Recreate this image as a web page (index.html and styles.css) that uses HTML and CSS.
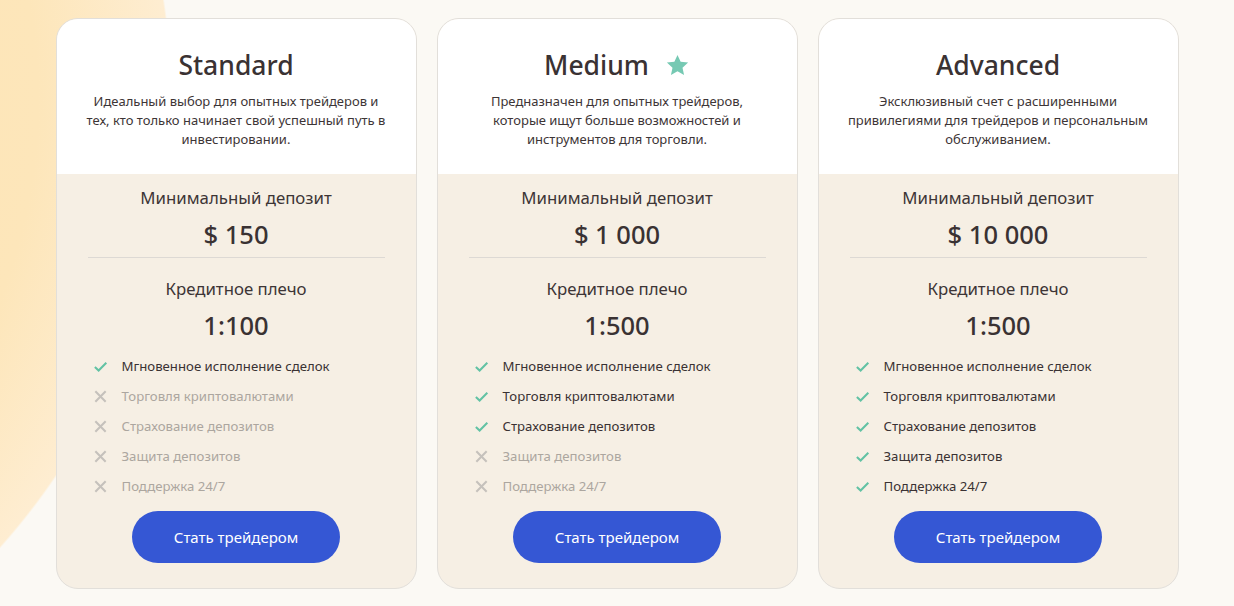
FILE: index.html
```html
<!DOCTYPE html>
<html lang="ru">
<head>
<meta charset="utf-8">
<title>Тарифы</title>
<link rel="stylesheet" href="styles.css">
</head>
<body>
<main class="plans">
  <section class="card">
    <header class="card-head">
      <h2 class="title">Standard</h2>
      <p class="desc">Идеальный выбор для опытных трейдеров и тех, кто только начинает свой успешный путь в инвестировании.</p>
    </header>
    <div class="card-body">
      <div class="label">Минимальный депозит</div>
      <div class="value">$ 150</div>
      <hr class="divider">
      <div class="label label-2">Кредитное плечо</div>
      <div class="value">1:100</div>
      <ul class="features">
        <li class="on"><svg class="ic" viewBox="0 0 16 16"><path d="M2 8.5l4 3.8L14.2 4"/></svg>Мгновенное исполнение сделок</li>
        <li class="off"><svg class="ic" viewBox="0 0 16 16"><path d="M2.5 2.5l11 11M13.5 2.5l-11 11"/></svg>Торговля криптовалютами</li>
        <li class="off"><svg class="ic" viewBox="0 0 16 16"><path d="M2.5 2.5l11 11M13.5 2.5l-11 11"/></svg>Страхование депозитов</li>
        <li class="off"><svg class="ic" viewBox="0 0 16 16"><path d="M2.5 2.5l11 11M13.5 2.5l-11 11"/></svg>Защита депозитов</li>
        <li class="off"><svg class="ic" viewBox="0 0 16 16"><path d="M2.5 2.5l11 11M13.5 2.5l-11 11"/></svg>Поддержка 24/7</li>
      </ul>
      <button class="btn">Стать трейдером</button>
    </div>
  </section>

  <section class="card">
    <header class="card-head">
      <h2 class="title">Medium<svg class="star" viewBox="0 0 24 24"><path d="M12 1.8l3 6.6 7.2.8-5.4 4.9 1.5 7.1L12 17.6l-6.3 3.6 1.5-7.1L1.8 9.2 9 8.4z"/></svg></h2>
      <p class="desc">Предназначен для опытных трейдеров, которые ищут больше возможностей и инструментов для торговли.</p>
    </header>
    <div class="card-body">
      <div class="label">Минимальный депозит</div>
      <div class="value">$ 1 000</div>
      <hr class="divider">
      <div class="label label-2">Кредитное плечо</div>
      <div class="value">1:500</div>
      <ul class="features">
        <li class="on"><svg class="ic" viewBox="0 0 16 16"><path d="M2 8.5l4 3.8L14.2 4"/></svg>Мгновенное исполнение сделок</li>
        <li class="on"><svg class="ic" viewBox="0 0 16 16"><path d="M2 8.5l4 3.8L14.2 4"/></svg>Торговля криптовалютами</li>
        <li class="on"><svg class="ic" viewBox="0 0 16 16"><path d="M2 8.5l4 3.8L14.2 4"/></svg>Страхование депозитов</li>
        <li class="off"><svg class="ic" viewBox="0 0 16 16"><path d="M2.5 2.5l11 11M13.5 2.5l-11 11"/></svg>Защита депозитов</li>
        <li class="off"><svg class="ic" viewBox="0 0 16 16"><path d="M2.5 2.5l11 11M13.5 2.5l-11 11"/></svg>Поддержка 24/7</li>
      </ul>
      <button class="btn">Стать трейдером</button>
    </div>
  </section>

  <section class="card">
    <header class="card-head">
      <h2 class="title">Advanced</h2>
      <p class="desc">Эксклюзивный счет с расширенными привилегиями для трейдеров и персональным обслуживанием.</p>
    </header>
    <div class="card-body">
      <div class="label">Минимальный депозит</div>
      <div class="value">$ 10 000</div>
      <hr class="divider">
      <div class="label label-2">Кредитное плечо</div>
      <div class="value">1:500</div>
      <ul class="features">
        <li class="on"><svg class="ic" viewBox="0 0 16 16"><path d="M2 8.5l4 3.8L14.2 4"/></svg>Мгновенное исполнение сделок</li>
        <li class="on"><svg class="ic" viewBox="0 0 16 16"><path d="M2 8.5l4 3.8L14.2 4"/></svg>Торговля криптовалютами</li>
        <li class="on"><svg class="ic" viewBox="0 0 16 16"><path d="M2 8.5l4 3.8L14.2 4"/></svg>Страхование депозитов</li>
        <li class="on"><svg class="ic" viewBox="0 0 16 16"><path d="M2 8.5l4 3.8L14.2 4"/></svg>Защита депозитов</li>
        <li class="on"><svg class="ic" viewBox="0 0 16 16"><path d="M2 8.5l4 3.8L14.2 4"/></svg>Поддержка 24/7</li>
      </ul>
      <button class="btn">Стать трейдером</button>
    </div>
  </section>
</main>
</body>
</html>
```

FILE: styles.css
```css
* { box-sizing: border-box; }
html, body { margin: 0; padding: 0; }
body {
  width: 1234px;
  height: 606px;
  overflow: hidden;
  background:
    radial-gradient(circle 672px at -500px 100px, #fde2ad 0%, #fde6ba 80%, #feedd1 99.7%, rgba(251, 249, 244, 0) 100%),
    #fbf9f4;
  font-family: "Noto Sans", "Open Sans", sans-serif;
  color: #3a3233;
}
.plans {
  display: flex;
  justify-content: center;
  gap: 20px;
  padding-top: 18px;
}
.card {
  width: 361px;
  height: 571px;
  border: 1px solid #e2dfda;
  border-radius: 22px;
  overflow: hidden;
  display: flex;
  flex-direction: column;
  background: #f6efe4;
}
.card-head {
  background: #fff;
  padding: 28px 27px 0;
  height: 155px;
  text-align: center;
}
.title {
  margin: 0;
  font-size: 26.5px;
  line-height: 36px;
  font-weight: 500;
  color: #3a3233;
  display: flex;
  align-items: center;
  justify-content: center;
}
.star {
  width: 25px;
  height: 25px;
  margin-left: 16px;
  fill: #76c9b3;
}
.desc {
  margin: 9px 0 0;
  font-size: 13px;
  line-height: 19px;
  color: #3d3536;
}
.card-body {
  flex: 1;
  padding: 12px 31px 0;
  display: flex;
  flex-direction: column;
  align-items: stretch;
  text-align: center;
}
.label {
  font-size: 16.8px;
  line-height: 24px;
  color: #3d3536;
}
.label-2 { margin-top: 19px; }
.value {
  margin-top: 7px;
  font-size: 25.5px;
  line-height: 34px;
  font-weight: 500;
  color: #3a3233;
}
.divider {
  margin: 6px 0 0;
  border: 0;
  height: 1px;
  background: #ddd9d4;
}
.features {
  list-style: none;
  margin: 9px 0 0;
  padding: 0 0 0 5px;
  text-align: left;
}
.features li {
  display: flex;
  align-items: center;
  height: 30px;
  font-size: 13.2px;
  color: #3a3233;
}
.features li.off { color: #aca69f; }
.ic {
  width: 15px;
  height: 15px;
  margin-right: 14px;
  fill: none;
  stroke-width: 2.2;
  stroke-linecap: butt;
}
.on .ic { stroke: #62c2a4; }
.off .ic { stroke: #c5c1bc; }
.btn {
  align-self: center;
  margin-top: 10px;
  width: 208px;
  height: 52px;
  border: 0;
  border-radius: 26px;
  background: #3557d4;
  color: #fff;
  font-family: inherit;
  font-size: 15px;
}
```
